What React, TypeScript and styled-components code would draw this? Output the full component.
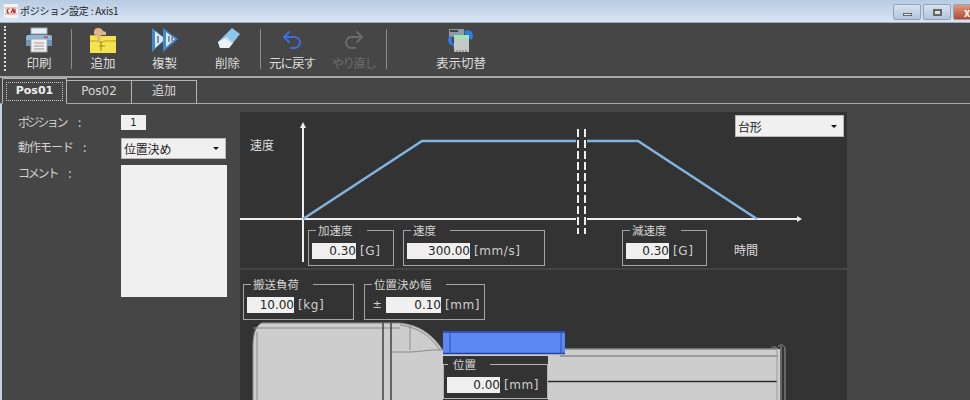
import React from "react";
import styled, { createGlobalStyle } from "styled-components";
import { Undo2, Redo2 } from "lucide-react";

const Global = createGlobalStyle`
  html, body { margin: 0; padding: 0; background: #464646; }
  body { font-family: "Noto Sans CJK JP", "Noto Sans", sans-serif; }
`;

const Win = styled.div`
  width: 970px; height: 400px; overflow: hidden; display: flex; flex-direction: column; background: #464646; color: #d8d8d8;
`;
const TitleBar = styled.div`
  height: 23px; flex: none; display: flex; align-items: center; padding-left: 4px; box-sizing: border-box;
  background: linear-gradient(#b7cbe2, #d9e5f3); border-bottom: 1px solid #9fb0c2;
`;
const TitleText = styled.span`
  font-size: 10px; color: #222; margin-left: 2px; line-height: 1; letter-spacing: -0.2px; white-space: pre;
`;
const WinButtons = styled.div`
  margin-left: auto; display: flex; gap: 2px; align-self: flex-start; padding-top: 4px; margin-right: -11px;
`;
const WinButton = styled.div<{ $close?: boolean }>`
  width: 28px; height: 16px; box-sizing: border-box; border: 1px solid #8fa3bb; border-radius: 2px;
  display: flex; align-items: center; justify-content: center; font-size: 11px; font-weight: bold; color: #fff;
  background: ${(p) => (p.$close ? "linear-gradient(#dd9a80, #b9492c)" : "linear-gradient(#d6e2ef, #b4c5d8)")};
`;
const MinGlyph = styled.span`width: 9px; height: 3px; background: #e8e8e8; border: 1px solid #666; box-sizing: border-box; margin-top: 4px;`;
const MaxGlyph = styled.span`width: 9px; height: 7px; border: 2px solid #666; background: #ddd; box-sizing: border-box;`;

const Toolbar = styled.div`
  height: 53px; flex: none; display: flex; align-items: stretch; background: #464646; border-bottom: 2px solid #a8a8a8; padding-left: 8px; position: relative;
`;
const Grip = styled.div`
  position: absolute; left: 4px; top: 3px; bottom: 5px; width: 2px; border-left: 2px dotted #dcdcdc;
`;
const ToolButton = styled.div<{ $w: number; $off?: boolean }>`
  width: ${(p) => p.$w}px; flex: none; display: flex; flex-direction: column; align-items: center; padding-top: 4px; box-sizing: border-box;
  color: ${(p) => (p.$off ? "#6c6c6c" : "#dcdcdc")};
`;
const IconBox = styled.div`height: 26px; display: flex; align-items: center; justify-content: center;`;
const ToolLabel = styled.span<{ $sp?: number }>`
  font-size: 12.5px; line-height: 16px; margin-top: 2px; white-space: nowrap; letter-spacing: ${(p) => p.$sp ?? 0}px;
`;
const ToolSep = styled.div`
  width: 1px; background: #8c8c8c; margin: 6px 1px 7px 1px; flex: none;
`;
const TabStrip = styled.div`
  height: 26px; flex: none; display: flex; align-items: flex-end; border-bottom: 1px solid #a8a8a8; padding-left: 2px; box-sizing: border-box; position: relative;
`;
const Tab = styled.div<{ $active?: boolean }>`
  width: 65px; height: ${(p) => (p.$active ? 26 : 23)}px; box-sizing: border-box;
  border: 1px solid #b4b4b4; border-bottom: ${(p) => (p.$active ? "1px solid #464646" : "none")}; border-left-width: ${(p) => (p.$active ? 1 : 0)}px;
  margin-bottom: ${(p) => (p.$active ? -1 : 0)}px; padding-bottom: ${(p) => (p.$active ? 0 : 3)}px;
  display: flex; align-items: center; justify-content: center; color: #d8d8d8;
  font-size: ${(p) => (p.$active ? 11 : 12)}px; line-height: 16px;
  font-family: "DejaVu Sans", "Noto Sans CJK JP", sans-serif;
  font-weight: ${(p) => (p.$active ? "bold" : "normal")};
  position: relative;
`;
const Focus = styled.span`
  width: 57px; height: 19px; border: 1px dotted #c8c8c8; box-sizing: border-box; display: flex; align-items: center; justify-content: center; color: #eee;
`;
const Main = styled.div`
  flex: 1; min-height: 0; display: flex; padding-top: 8px; border-left: 2px solid #c3d3e6;
`;
const Side = styled.div`
  width: 238px; flex: none; display: grid; grid-template-columns: 103px 106px; grid-template-rows: 16px 21px 132px; padding: 3px 0 0 16px; box-sizing: border-box; row-gap: 7px; align-content: start;
`;
const SideLabel = styled.div<{ $sp: number; $dy: number }>`
  font-size: 12px; line-height: 16px; color: #d0d0d0; white-space: pre; letter-spacing: ${(p) => p.$sp}px; margin-top: ${(p) => p.$dy}px; display: flex;
`;
const Colon = styled.span<{ $ml: number }>`
  margin-left: ${(p) => p.$ml}px; letter-spacing: 0;
`;
const PosBox = styled.div`
  width: 25px; height: 15px; background: #f0f0f0; color: #222; font: 10px/15px "DejaVu Sans", sans-serif; text-align: center;
`;
const Combo = styled.div<{ $w: number; $h: number }>`
  width: ${(p) => p.$w}px; height: ${(p) => p.$h}px; flex: none; background: #f0f0f0; color: #222; font-size: 12px; box-sizing: border-box;
  border: 1px solid #b8b8b8; display: flex; align-items: center; justify-content: space-between; padding: 0 6px 0 2px; letter-spacing: -0.2px;
`;
const Caret = styled.span`
  width: 0; height: 0; border-left: 3px solid transparent; border-right: 3px solid transparent; border-top: 3px solid #111;
`;
const Comment = styled.div`width: 106px; height: 132px; background: #f0f0f0; margin-top: -1px;`;

const Panels = styled.div`
  width: 607px; flex: none; display: flex; flex-direction: column; background: #333333; min-height: 0;
`;
const ChartPanel = styled.div`
  height: 158px; flex: none; position: relative; border-bottom: 2px solid #444; display: flex; align-items: flex-start; padding: 118px 0 0 68px; box-sizing: border-box;
`;
const Drawing = styled.svg`position: absolute; left: 0; top: 0;`;
const ChartSelect = styled.div`position: absolute; right: 3px; top: 3px;`;
const ChartLabel = styled.span<{ $x: number; $y: number }>`
  position: absolute; left: ${(p) => p.$x}px; top: ${(p) => p.$y}px; font-size: 12px; line-height: 16px; color: #ddd;
`;
const Group = styled.div<{ $w: number; $ml?: number }>`
  position: relative; width: ${(p) => p.$w}px; height: 36px; flex: none; box-sizing: border-box; margin-left: ${(p) => p.$ml ?? 0}px;
  border: 1px solid #a5a5a5; display: flex; align-items: flex-start; padding: 12px 0 0 3px; background: #333;
`;
const Legend = styled.span`
  position: absolute; left: 7px; top: -8px; background: #333; font-size: 11.5px; line-height: 14px; padding: 0 14px 0 2px; color: #d4d4d4; white-space: nowrap;
`;
const NumBox = styled.div<{ $w: number }>`
  width: ${(p) => p.$w}px; height: 16px; background: #f0f0f0; color: #222; font: 12px/16px "DejaVu Sans", sans-serif; text-align: right; flex: none;
`;
const Unit = styled.span`font: 12px/16px "DejaVu Sans", sans-serif; color: #cfcfcf; margin-left: 4px; white-space: nowrap; letter-spacing: 0.6px;`;
const Plus = styled.span`font: 11px/16px "DejaVu Sans", sans-serif; color: #cfcfcf; width: 18px; text-align: center; flex: none;`;
const LowerPanel = styled.div`
  flex: 1; position: relative; display: flex; align-items: flex-start; padding: 14px 0 0 3px; overflow: hidden;
`;
const PositionGroup = styled.div`
  position: absolute; left: 203px; top: 86px; width: 105px; height: 44px; background: #333; box-sizing: border-box; padding: 21px 0 0 4px; display: flex; align-items: flex-start;
`;
const PositionFrame = styled.span`
  position: absolute; left: 0; right: 0; top: 8px; bottom: 1px; border: 1px solid #b4b4b4;
`;
const PositionLegend = styled.span`
  position: absolute; left: 5px; top: 0; background: #333; font-size: 11.5px; line-height: 16px; padding: 0 14px 0 5px; color: #d4d4d4;
`;

const Printer = () => (
  <svg width="28" height="26" viewBox="0 0 28 26">
    <rect x="6" y="1" width="16" height="6" fill="#e8eef5" stroke="#9ab" />
    <path d="M3 8h22a2 2 0 0 1 2 2v8H1v-8a2 2 0 0 1 2-2z" fill="#8db6d8" />
    <rect x="1" y="13" width="26" height="6" fill="#6b97bb" />
    <circle cx="22" cy="10" r="1" fill="#e33" />
    <rect x="19" y="9.5" width="1.5" height="1.5" fill="#35c" />
    <rect x="6" y="12" width="16" height="13" fill="#eee" stroke="#aaa" />
    <path d="M9 16h10M9 19h10M9 22h10" stroke="#999" />
  </svg>
);
const Folder = () => (
  <svg width="28" height="26" viewBox="0 0 28 26">
    <path d="M1 8h8l2-2h0v20H1z" fill="#caa820" />
    <path d="M1 9h26v17H1z" fill="#f5e34e" />
    <path d="M1 14l8-0 3 2 3-2h12" stroke="#b8a020" fill="none" />
    <path d="M12 24V14M10 19h6" stroke="#a08a20" />
    <path d="M6 2c3-2 7-1 8 2l3 1v3h-5l-1 6-2-0-1-5C5 9 4 5 6 2z" fill="#e2b48c" />
  </svg>
);
const Copy = () => (
  <svg width="28" height="26" viewBox="0 0 28 26">
    <path d="M1 1l14 11L1 25z" fill="#3d8ad0" />
    <path d="M4 4v17l10-9z" fill="#dce9f4" />
    <path d="M12 1l15 11-15 13z" fill="#3d8ad0" />
    <path d="M15 5v15l9-8z" fill="#dce9f4" />
    <path d="M7 9v7M18 9v6M21 10v4" stroke="#456" strokeWidth="1.2" />
  </svg>
);
const Eraser = () => (
  <svg width="26" height="26" viewBox="0 0 26 26">
    <path d="M17 1l8 6-11 14-9 0-2-6z" fill="#8cc8ee" />
    <path d="M3 15l2 6 9 0 4-5-6-6z" fill="#eaf2f8" />
    <path d="M10 10l7 6" stroke="#a8c4d8" />
  </svg>
);
const Switcher = () => (
  <svg width="28" height="26" viewBox="0 0 28 26">
    <path d="M2 2h15v8H2z" fill="#8f9aa6" />
    <rect x="3" y="3" width="8" height="2" fill="#444" />
    <path d="M17 4c6-2 9 0 9 6l-2 3-3-3h-2" fill="#2f7be0" />
    <path d="M1 12c0-2 2-3 4-3v9c-3 0-4-3-4-6z" fill="#2f7be0" />
    <rect x="7" y="8" width="15" height="17" fill="#c4c9c8" />
    <rect x="7" y="8" width="15" height="4" fill="#9be6b2" />
    <path d="M7 25v-2M10 25v-2M13 25v-2M16 25v-2M19 25v-2" stroke="#666" />
    <path d="M4 17c2 3 3 3 3 3v-4z" fill="#2f7be0" />
  </svg>
);
const Logo = () => (
  <svg width="14" height="14" viewBox="0 0 14 14">
    <rect width="14" height="14" fill="#f6f2ee" />
    <path d="M1 4h12M1 10h12" stroke="#b33" strokeWidth="1" opacity="0.5" />
    <path d="M5 5a2 2 0 1 0 0 4M7 9l2-4 1 4M11 5v4" stroke="#b22" strokeWidth="1.2" fill="none" />
  </svg>
);

const App: React.FC = () => (
  <Win>
    <Global />
    <TitleBar>
      <Logo />
      <TitleText>ポジション設定 : Axis1</TitleText>
      <WinButtons>
        <WinButton><MinGlyph /></WinButton>
        <WinButton><MaxGlyph /></WinButton>
        <WinButton $close>x</WinButton>
      </WinButtons>
    </TitleBar>
    <Toolbar>
      <Grip />
      <ToolButton $w={62}><IconBox><Printer /></IconBox><ToolLabel>印刷</ToolLabel></ToolButton>
      <ToolSep />
      <ToolButton $w={60}><IconBox><Folder /></IconBox><ToolLabel>追加</ToolLabel></ToolButton>
      <ToolButton $w={63}><IconBox><Copy /></IconBox><ToolLabel>複製</ToolLabel></ToolButton>
      <ToolButton $w={63}><IconBox><Eraser /></IconBox><ToolLabel>削除</ToolLabel></ToolButton>
      <ToolSep />
      <ToolButton $w={60}><IconBox><Undo2 size={24} color="#3f6fd8" strokeWidth={2} /></IconBox><ToolLabel $sp={-1}>元に戻す</ToolLabel></ToolButton>
      <ToolButton $w={63} $off><IconBox><Redo2 size={24} color="#6a6a6a" strokeWidth={2} /></IconBox><ToolLabel $sp={-1.5}>やり直し</ToolLabel></ToolButton>
      <ToolSep />
      <ToolButton $w={146}><IconBox><Switcher /></IconBox><ToolLabel>表示切替</ToolLabel></ToolButton>
    </Toolbar>
    <TabStrip>
      <Tab $active><Focus>Pos01</Focus></Tab>
      <Tab>Pos02</Tab>
      <Tab>追加</Tab>
    </TabStrip>
    <Main>
      <Side>
        <SideLabel $sp={-2.4} $dy={-1}>ポジション<Colon $ml={12}>:</Colon></SideLabel>
        <PosBox>1</PosBox>
        <SideLabel $sp={-1} $dy={1}>動作モード<Colon $ml={10}>:</Colon></SideLabel>
        <Combo $w={105} $h={21}>位置決め<Caret /></Combo>
        <SideLabel $sp={-2.2} $dy={-1}>コメント<Colon $ml={11}>:</Colon></SideLabel>
        <Comment />
      </Side>
      <Panels>
        <ChartPanel>
          <Drawing width="607" height="158" viewBox="240 112 607 158">
            <path d="M240 219H576M587 219H800" stroke="#eee" strokeWidth="2" />
            <path d="M802 219l-5-3v6z" fill="#eee" />
            <path d="M303 262V125" stroke="#eee" strokeWidth="2" />
            <path d="M303 122l-3 6h6z" fill="#eee" />
            <path d="M303 219L422 141H576M587 141H638L757 219" stroke="#82b4e2" strokeWidth="2.5" fill="none" />
            <path d="M578 129V234M585 129V234" stroke="#eee" strokeWidth="2" strokeDasharray="8 3" />
          </Drawing>
          <ChartLabel $x={10} $y={25}>速度</ChartLabel>
          <ChartLabel $x={494} $y={130}>時間</ChartLabel>
          <ChartSelect><Combo $w={109} $h={22}>台形<Caret /></Combo></ChartSelect>
          <Group $w={86}><Legend>加速度</Legend><NumBox $w={44}>0.30</NumBox><Unit>[G]</Unit></Group>
          <Group $w={142} $ml={9}><Legend>速度</Legend><NumBox $w={63}>300.00</NumBox><Unit>[mm/s]</Unit></Group>
          <Group $w={85} $ml={77}><Legend>減速度</Legend><NumBox $w={43}>0.30</NumBox><Unit>[G]</Unit></Group>
        </ChartPanel>
        <LowerPanel>
          <Drawing width="607" height="130" viewBox="240 270 607 130">
            <path d="M262 323H398C420 324 434 336 444 352H560V349H780V400H253V345C253 334 256 325 262 323z" fill="#cdcdcd" />
            <path d="M262 323H398C420 324 434 336 444 352M253 400V345C253 334 256 325 262 323M257 400V332M253 328H400" stroke="#8a8a8a" fill="none" />
            <path d="M383 323V400M391 323V400" stroke="#3a3a3a" strokeWidth="1.4" />
            <path d="M391 352H410C420 352 430 349 442 350M410 325V350M400 325C420 328 430 336 440 350" stroke="#8a8a8a" fill="none" />
            <path d="M560 349H778M560 356H778" stroke="#8a8a8a" strokeWidth="1.4" />
            <path d="M548 381.5H777" stroke="#2a2a2a" strokeWidth="1.6" />
            <path d="M777 350V400M781 346V400M785 348V400M771 349c2-3 5-3 6 0M778 347c2-3 5-3 7 1" stroke="#9a9a9a" fill="none" />
            <rect x="443" y="331" width="122" height="23" fill="#5b88f2" />
            <path d="M443 332H565M443 353.5H565" stroke="#24409e" strokeWidth="1.5" />
            <path d="M450 331V354M561 331V354" stroke="#2f50b8" />
          </Drawing>
          <Group $w={111}><Legend>搬送負荷</Legend><NumBox $w={47}>10.00</NumBox><Unit>[kg]</Unit></Group>
          <Group $w={121} $ml={10}><Legend>位置決め幅</Legend><Plus>±</Plus><NumBox $w={55}>0.10</NumBox><Unit>[mm]</Unit></Group>
          <PositionGroup>
            <PositionFrame /><PositionLegend>位置</PositionLegend>
            <NumBox $w={53}>0.00</NumBox><Unit>[mm]</Unit>
          </PositionGroup>
        </LowerPanel>
      </Panels>
    </Main>
  </Win>
);

export default App;
